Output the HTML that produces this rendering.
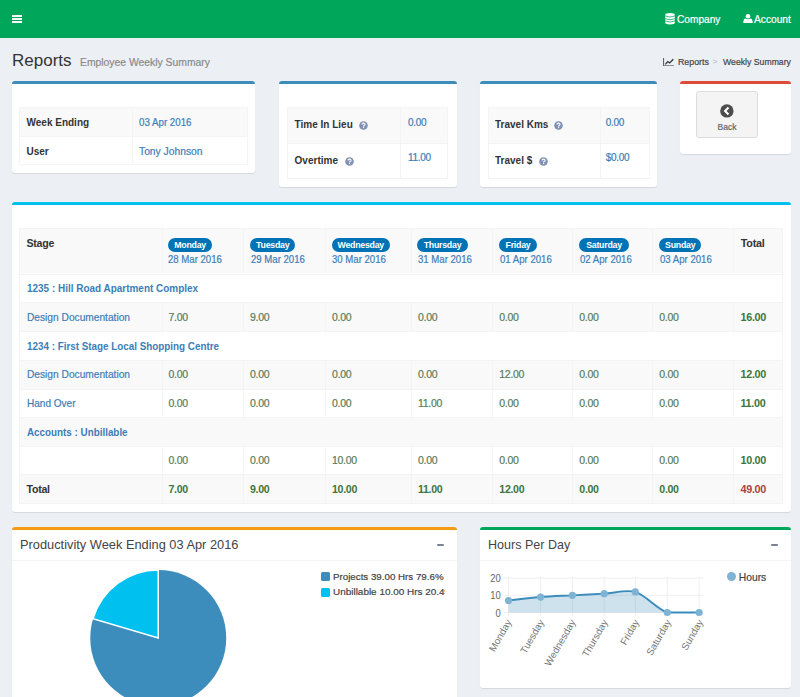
<!DOCTYPE html>
<html><head><meta charset="utf-8"><title>Reports</title>
<style>
html,body{margin:0;padding:0}
body{width:800px;height:697px;overflow:hidden;position:relative;background:#ecf0f5;font-family:"Liberation Sans", sans-serif;}
.a{position:absolute;box-sizing:border-box}
.box{position:absolute;background:#fff;border-radius:3px;box-shadow:0 1px 1px rgba(0,0,0,0.1)}
.t{position:absolute;height:0;line-height:0;white-space:nowrap}
.t span{display:inline-block;vertical-align:baseline}
.n{-webkit-text-stroke:0.2px currentColor}
.r{text-align:right}
.c{text-align:center}
</style></head><body>

<div class="a" style="left:0px;top:0px;width:800px;height:38px;background:#00a65a"></div>
<div class="a" style="left:11.5px;top:15px;width:10.0px;height:1.6999999999999993px;background:#fff"></div>
<div class="a" style="left:11.5px;top:18.2px;width:10.0px;height:1.6999999999999993px;background:#fff"></div>
<div class="a" style="left:11.5px;top:21.3px;width:10.0px;height:1.6999999999999993px;background:#fff"></div>
<svg class="a" style="left:664.5px;top:13px" width="10" height="11.5" viewBox="0 0 10 11.5">
<path d="M0.2 1.8 Q0.2 0.1 5 0.1 Q9.8 0.1 9.8 1.8 V9.7 Q9.8 11.4 5 11.4 Q0.2 11.4 0.2 9.7Z" fill="#fff"/>
<g fill="none" stroke="#00a65a" stroke-width="0.75">
<path d="M0 2.9 Q5 5.2 10 2.9"/><path d="M0 5.6 Q5 7.9 10 5.6"/><path d="M0 7.9 Q5 10.2 10 7.9"/>
</g></svg>
<div class="t n" style="left:677px;top:19.0px;font-size:10.6px;color:#fff;font-weight:400;transform:scaleX(0.956);transform-origin:0 0"><span>Company</span></div>
<svg class="a" style="left:742.5px;top:14px" width="10" height="9" viewBox="0 0 10 9">
<g fill="#fff"><circle cx="5" cy="2.3" r="2.3"/><path d="M0.3 9 Q0.3 4.8 2.6 4.6 Q5 6 7.4 4.6 Q9.7 4.8 9.7 9Z"/></g></svg>
<div class="t n" style="left:754px;top:19.0px;font-size:10.6px;color:#fff;font-weight:400;transform:scaleX(0.963);transform-origin:0 0"><span>Account</span></div>
<div class="t" style="left:12px;top:60.5px;font-size:17px;color:#333;font-weight:400;"><span>Reports</span></div>
<div class="t n" style="left:80px;top:62.0px;font-size:11px;color:#8a8a8a;font-weight:400;transform:scaleX(0.942);transform-origin:0 0"><span>Employee Weekly Summary</span></div>
<svg class="a" style="left:663px;top:57.8px" width="11.5" height="8.5" viewBox="0 0 11.5 8.5">
<path d="M0.6 0 V7.9 H11" fill="none" stroke="#555" stroke-width="1"/>
<path d="M2.3 6.4 L4.8 3.6 L6.6 5 L10.3 1.2" fill="none" stroke="#333" stroke-width="1.3"/>
</svg>
<div class="t n" style="left:678px;top:62.0px;font-size:8.8px;color:#444;font-weight:400;"><span>Reports</span></div>
<div class="t n" style="left:712.8px;top:62.3px;font-size:8px;color:#c4c4c4;font-weight:400;"><span>&gt;</span></div>
<div class="t n" style="left:723px;top:62.0px;font-size:9.3px;color:#444;font-weight:400;transform:scaleX(0.935);transform-origin:0 0"><span>Weekly Summary</span></div>
<div class="box" style="left:12px;top:81px;width:243px;height:89px;border-top:3px solid #3c8dbc"></div>
<div class="box" style="left:279px;top:81px;width:177.5px;height:103px;border-top:3px solid #3c8dbc"></div>
<div class="box" style="left:480px;top:81px;width:177px;height:103px;border-top:3px solid #3c8dbc"></div>
<div class="box" style="left:680px;top:81px;width:110.5px;height:70px;border-top:3px solid #dd4b39"></div>
<div class="a" style="left:19px;top:107px;width:229px;height:28.5px;background:#f9f9f9"></div>
<div class="a" style="left:19px;top:135.5px;width:229px;height:29.0px;background:#fff"></div>
<div class="a" style="left:19px;top:107px;width:229px;height:57.5px;border:1px solid #f4f4f4"></div>
<div class="a" style="left:19px;top:135.5px;width:229px;height:1.0px;background:#f4f4f4"></div>
<div class="a" style="left:132px;top:107px;width:1px;height:57.5px;background:#f4f4f4"></div>
<div class="t" style="left:26.5px;top:122.7px;font-size:10px;color:#333;font-weight:700;"><span>Week Ending</span></div>
<div class="t n" style="left:139px;top:122.5px;font-size:10.2px;color:#3d7db8;font-weight:400;transform:scaleX(0.955);transform-origin:0 0"><span>03 Apr 2016</span></div>
<div class="t" style="left:26.5px;top:152.0px;font-size:10px;color:#333;font-weight:700;"><span>User</span></div>
<div class="t n" style="left:139px;top:152.0px;font-size:10.3px;color:#3d7db8;font-weight:400;"><span>Tony Johnson</span></div>
<div class="a" style="left:286.5px;top:107px;width:161.5px;height:36px;background:#f9f9f9"></div>
<div class="a" style="left:286.5px;top:143px;width:161.5px;height:36px;background:#fff"></div>
<div class="a" style="left:286.5px;top:107px;width:161.5px;height:72px;border:1px solid #f4f4f4"></div>
<div class="a" style="left:286.5px;top:143px;width:161.5px;height:1px;background:#f4f4f4"></div>
<div class="a" style="left:400px;top:107px;width:1px;height:72px;background:#f4f4f4"></div>
<div class="t" style="left:294.6px;top:124.7px;font-size:10px;color:#333;font-weight:700;"><span>Time In Lieu</span></div>
<svg class="a" style="left:358.6px;top:120.8px" width="9" height="9" viewBox="0 0 9 9"><circle cx="4.5" cy="4.5" r="4.3" fill="#8190b5"/><path d="M3 3.5 Q3 2.1 4.5 2.1 Q6 2.1 6 3.4 Q6 4.2 5 4.6 Q4.6 4.8 4.6 5.4" fill="none" stroke="#fff" stroke-width="1.1"/><rect x="4.0" y="6" width="1.1" height="1.1" fill="#fff"/></svg>
<div class="t n" style="left:408px;top:122.5px;font-size:10px;color:#3d7db8;font-weight:400;letter-spacing:-0.3px"><span>0.00</span></div>
<div class="t" style="left:294.6px;top:161.0px;font-size:10px;color:#333;font-weight:700;"><span>Overtime</span></div>
<svg class="a" style="left:345.3px;top:156.5px" width="9" height="9" viewBox="0 0 9 9"><circle cx="4.5" cy="4.5" r="4.3" fill="#8190b5"/><path d="M3 3.5 Q3 2.1 4.5 2.1 Q6 2.1 6 3.4 Q6 4.2 5 4.6 Q4.6 4.8 4.6 5.4" fill="none" stroke="#fff" stroke-width="1.1"/><rect x="4.0" y="6" width="1.1" height="1.1" fill="#fff"/></svg>
<div class="t n" style="left:408px;top:158.0px;font-size:10px;color:#3d7db8;font-weight:400;letter-spacing:-0.3px"><span>11.00</span></div>
<div class="a" style="left:487.5px;top:107px;width:162.0px;height:36px;background:#f9f9f9"></div>
<div class="a" style="left:487.5px;top:143px;width:162.0px;height:36px;background:#fff"></div>
<div class="a" style="left:487.5px;top:107px;width:162.0px;height:72px;border:1px solid #f4f4f4"></div>
<div class="a" style="left:487.5px;top:143px;width:162.0px;height:1px;background:#f4f4f4"></div>
<div class="a" style="left:599.5px;top:107px;width:1.0px;height:72px;background:#f4f4f4"></div>
<div class="t" style="left:495px;top:124.7px;font-size:10px;color:#333;font-weight:700;"><span>Travel Kms</span></div>
<svg class="a" style="left:553.6px;top:120.8px" width="9" height="9" viewBox="0 0 9 9"><circle cx="4.5" cy="4.5" r="4.3" fill="#8190b5"/><path d="M3 3.5 Q3 2.1 4.5 2.1 Q6 2.1 6 3.4 Q6 4.2 5 4.6 Q4.6 4.8 4.6 5.4" fill="none" stroke="#fff" stroke-width="1.1"/><rect x="4.0" y="6" width="1.1" height="1.1" fill="#fff"/></svg>
<div class="t n" style="left:605.7px;top:122.5px;font-size:10px;color:#3d7db8;font-weight:400;letter-spacing:-0.3px"><span>0.00</span></div>
<div class="t" style="left:495px;top:161.0px;font-size:10px;color:#333;font-weight:700;"><span>Travel $</span></div>
<svg class="a" style="left:538.5px;top:156.5px" width="9" height="9" viewBox="0 0 9 9"><circle cx="4.5" cy="4.5" r="4.3" fill="#8190b5"/><path d="M3 3.5 Q3 2.1 4.5 2.1 Q6 2.1 6 3.4 Q6 4.2 5 4.6 Q4.6 4.8 4.6 5.4" fill="none" stroke="#fff" stroke-width="1.1"/><rect x="4.0" y="6" width="1.1" height="1.1" fill="#fff"/></svg>
<div class="t n" style="left:605.7px;top:158.0px;font-size:10px;color:#3d7db8;font-weight:400;letter-spacing:-0.3px"><span>$0.00</span></div>
<div class="a" style="left:696px;top:91px;width:62px;height:47px;background:#f4f4f4;border:1px solid #ddd;border-radius:3px"></div>
<svg class="a" style="left:720px;top:104.4px" width="14" height="14" viewBox="0 0 14 14">
<circle cx="6.9" cy="6.9" r="6.7" fill="#4d4d4d"/><path d="M8.5 3.4 L5.1 6.9 L8.5 10.4" fill="none" stroke="#fff" stroke-width="2.1"/></svg>
<div class="t c n" style="left:527px;width:400px;top:126.7px;font-size:8.5px;color:#666;font-weight:400;"><span>Back</span></div>
<div class="box" style="left:12px;top:202px;width:778.5px;height:306.5px;border-top:3px solid #00c0ef"></div>
<div class="a" style="left:19px;top:228.2px;width:764px;height:45.30000000000001px;background:#f9f9f9"></div>
<div class="a" style="left:19px;top:273.5px;width:764px;height:28.5px;background:#fff"></div>
<div class="a" style="left:19px;top:302px;width:764px;height:28.899999999999977px;background:#f9f9f9"></div>
<div class="a" style="left:19px;top:330.9px;width:764px;height:28.600000000000023px;background:#fff"></div>
<div class="a" style="left:19px;top:359.5px;width:764px;height:29.100000000000023px;background:#f9f9f9"></div>
<div class="a" style="left:19px;top:388.6px;width:764px;height:28.599999999999966px;background:#fff"></div>
<div class="a" style="left:19px;top:417.2px;width:764px;height:28.5px;background:#f9f9f9"></div>
<div class="a" style="left:19px;top:445.7px;width:764px;height:28.600000000000023px;background:#fff"></div>
<div class="a" style="left:19px;top:474.3px;width:764px;height:29.5px;background:#f9f9f9"></div>
<div class="a" style="left:19px;top:228.2px;width:764px;height:275.6px;border:1px solid #f4f4f4"></div>
<div class="a" style="left:19px;top:273.5px;width:764px;height:1.0px;background:#f4f4f4"></div>
<div class="a" style="left:19px;top:302px;width:764px;height:1px;background:#f4f4f4"></div>
<div class="a" style="left:19px;top:330.9px;width:764px;height:1.0px;background:#f4f4f4"></div>
<div class="a" style="left:19px;top:359.5px;width:764px;height:1.0px;background:#f4f4f4"></div>
<div class="a" style="left:19px;top:388.6px;width:764px;height:1.0px;background:#f4f4f4"></div>
<div class="a" style="left:19px;top:417.2px;width:764px;height:1.0px;background:#f4f4f4"></div>
<div class="a" style="left:19px;top:445.7px;width:764px;height:1.0px;background:#f4f4f4"></div>
<div class="a" style="left:19px;top:474.3px;width:764px;height:1.0px;background:#f4f4f4"></div>
<div class="a" style="left:161.5px;top:228.2px;width:1.0px;height:45.30000000000001px;background:#f4f4f4"></div>
<div class="a" style="left:243px;top:228.2px;width:1px;height:45.30000000000001px;background:#f4f4f4"></div>
<div class="a" style="left:325px;top:228.2px;width:1px;height:45.30000000000001px;background:#f4f4f4"></div>
<div class="a" style="left:411px;top:228.2px;width:1px;height:45.30000000000001px;background:#f4f4f4"></div>
<div class="a" style="left:492.3px;top:228.2px;width:1.0px;height:45.30000000000001px;background:#f4f4f4"></div>
<div class="a" style="left:572.3px;top:228.2px;width:1.0px;height:45.30000000000001px;background:#f4f4f4"></div>
<div class="a" style="left:652.3px;top:228.2px;width:1.0px;height:45.30000000000001px;background:#f4f4f4"></div>
<div class="a" style="left:733px;top:228.2px;width:1px;height:45.30000000000001px;background:#f4f4f4"></div>
<div class="a" style="left:161.5px;top:302px;width:1.0px;height:28.899999999999977px;background:#f4f4f4"></div>
<div class="a" style="left:243px;top:302px;width:1px;height:28.899999999999977px;background:#f4f4f4"></div>
<div class="a" style="left:325px;top:302px;width:1px;height:28.899999999999977px;background:#f4f4f4"></div>
<div class="a" style="left:411px;top:302px;width:1px;height:28.899999999999977px;background:#f4f4f4"></div>
<div class="a" style="left:492.3px;top:302px;width:1.0px;height:28.899999999999977px;background:#f4f4f4"></div>
<div class="a" style="left:572.3px;top:302px;width:1.0px;height:28.899999999999977px;background:#f4f4f4"></div>
<div class="a" style="left:652.3px;top:302px;width:1.0px;height:28.899999999999977px;background:#f4f4f4"></div>
<div class="a" style="left:733px;top:302px;width:1px;height:28.899999999999977px;background:#f4f4f4"></div>
<div class="a" style="left:161.5px;top:359.5px;width:1.0px;height:29.100000000000023px;background:#f4f4f4"></div>
<div class="a" style="left:243px;top:359.5px;width:1px;height:29.100000000000023px;background:#f4f4f4"></div>
<div class="a" style="left:325px;top:359.5px;width:1px;height:29.100000000000023px;background:#f4f4f4"></div>
<div class="a" style="left:411px;top:359.5px;width:1px;height:29.100000000000023px;background:#f4f4f4"></div>
<div class="a" style="left:492.3px;top:359.5px;width:1.0px;height:29.100000000000023px;background:#f4f4f4"></div>
<div class="a" style="left:572.3px;top:359.5px;width:1.0px;height:29.100000000000023px;background:#f4f4f4"></div>
<div class="a" style="left:652.3px;top:359.5px;width:1.0px;height:29.100000000000023px;background:#f4f4f4"></div>
<div class="a" style="left:733px;top:359.5px;width:1px;height:29.100000000000023px;background:#f4f4f4"></div>
<div class="a" style="left:161.5px;top:388.6px;width:1.0px;height:28.599999999999966px;background:#f4f4f4"></div>
<div class="a" style="left:243px;top:388.6px;width:1px;height:28.599999999999966px;background:#f4f4f4"></div>
<div class="a" style="left:325px;top:388.6px;width:1px;height:28.599999999999966px;background:#f4f4f4"></div>
<div class="a" style="left:411px;top:388.6px;width:1px;height:28.599999999999966px;background:#f4f4f4"></div>
<div class="a" style="left:492.3px;top:388.6px;width:1.0px;height:28.599999999999966px;background:#f4f4f4"></div>
<div class="a" style="left:572.3px;top:388.6px;width:1.0px;height:28.599999999999966px;background:#f4f4f4"></div>
<div class="a" style="left:652.3px;top:388.6px;width:1.0px;height:28.599999999999966px;background:#f4f4f4"></div>
<div class="a" style="left:733px;top:388.6px;width:1px;height:28.599999999999966px;background:#f4f4f4"></div>
<div class="a" style="left:161.5px;top:445.7px;width:1.0px;height:28.600000000000023px;background:#f4f4f4"></div>
<div class="a" style="left:243px;top:445.7px;width:1px;height:28.600000000000023px;background:#f4f4f4"></div>
<div class="a" style="left:325px;top:445.7px;width:1px;height:28.600000000000023px;background:#f4f4f4"></div>
<div class="a" style="left:411px;top:445.7px;width:1px;height:28.600000000000023px;background:#f4f4f4"></div>
<div class="a" style="left:492.3px;top:445.7px;width:1.0px;height:28.600000000000023px;background:#f4f4f4"></div>
<div class="a" style="left:572.3px;top:445.7px;width:1.0px;height:28.600000000000023px;background:#f4f4f4"></div>
<div class="a" style="left:652.3px;top:445.7px;width:1.0px;height:28.600000000000023px;background:#f4f4f4"></div>
<div class="a" style="left:733px;top:445.7px;width:1px;height:28.600000000000023px;background:#f4f4f4"></div>
<div class="a" style="left:161.5px;top:474.3px;width:1.0px;height:29.5px;background:#f4f4f4"></div>
<div class="a" style="left:243px;top:474.3px;width:1px;height:29.5px;background:#f4f4f4"></div>
<div class="a" style="left:325px;top:474.3px;width:1px;height:29.5px;background:#f4f4f4"></div>
<div class="a" style="left:411px;top:474.3px;width:1px;height:29.5px;background:#f4f4f4"></div>
<div class="a" style="left:492.3px;top:474.3px;width:1.0px;height:29.5px;background:#f4f4f4"></div>
<div class="a" style="left:572.3px;top:474.3px;width:1.0px;height:29.5px;background:#f4f4f4"></div>
<div class="a" style="left:652.3px;top:474.3px;width:1.0px;height:29.5px;background:#f4f4f4"></div>
<div class="a" style="left:733px;top:474.3px;width:1px;height:29.5px;background:#f4f4f4"></div>
<div class="t" style="left:26.5px;top:242.5px;font-size:10.6px;color:#333;font-weight:700;letter-spacing:-0.25px"><span>Stage</span></div>
<div class="a" style="left:168px;top:237.5px;width:44.19999999999999px;height:14.0px;background:#0073b7;border-radius:7px"></div>
<div class="t c" style="left:-9.900000000000006px;width:400px;top:245.0px;font-size:8.8px;color:#fff;font-weight:700;letter-spacing:-0.25px"><span>Monday</span></div>
<div class="t n" style="left:168.4px;top:259.5px;font-size:10.2px;color:#3d7db8;font-weight:400;transform:scaleX(0.942);transform-origin:0 0"><span>28 Mar 2016</span></div>
<div class="a" style="left:250.2px;top:237.5px;width:45.0px;height:14.0px;background:#0073b7;border-radius:7px"></div>
<div class="t c" style="left:72.69999999999999px;width:400px;top:245.0px;font-size:8.8px;color:#fff;font-weight:700;letter-spacing:-0.25px"><span>Tuesday</span></div>
<div class="t n" style="left:250.6px;top:259.5px;font-size:10.2px;color:#3d7db8;font-weight:400;transform:scaleX(0.942);transform-origin:0 0"><span>29 Mar 2016</span></div>
<div class="a" style="left:331.5px;top:237.5px;width:58.5px;height:14.0px;background:#0073b7;border-radius:7px"></div>
<div class="t c" style="left:160.75px;width:400px;top:245.0px;font-size:8.8px;color:#fff;font-weight:700;letter-spacing:-0.25px"><span>Wednesday</span></div>
<div class="t n" style="left:331.9px;top:259.5px;font-size:10.2px;color:#3d7db8;font-weight:400;transform:scaleX(0.942);transform-origin:0 0"><span>30 Mar 2016</span></div>
<div class="a" style="left:417.3px;top:237.5px;width:50.39999999999998px;height:14.0px;background:#0073b7;border-radius:7px"></div>
<div class="t c" style="left:242.5px;width:400px;top:245.0px;font-size:8.8px;color:#fff;font-weight:700;letter-spacing:-0.25px"><span>Thursday</span></div>
<div class="t n" style="left:417.7px;top:259.5px;font-size:10.2px;color:#3d7db8;font-weight:400;transform:scaleX(0.942);transform-origin:0 0"><span>31 Mar 2016</span></div>
<div class="a" style="left:499.2px;top:237.5px;width:37.599999999999966px;height:14.0px;background:#0073b7;border-radius:7px"></div>
<div class="t c" style="left:318.0px;width:400px;top:245.0px;font-size:8.8px;color:#fff;font-weight:700;letter-spacing:-0.25px"><span>Friday</span></div>
<div class="t n" style="left:499.59999999999997px;top:259.5px;font-size:10.2px;color:#3d7db8;font-weight:400;transform:scaleX(0.942);transform-origin:0 0"><span>01 Apr 2016</span></div>
<div class="a" style="left:579.2px;top:237.5px;width:49.60000000000002px;height:14.0px;background:#0073b7;border-radius:7px"></div>
<div class="t c" style="left:404.0px;width:400px;top:245.0px;font-size:8.8px;color:#fff;font-weight:700;letter-spacing:-0.25px"><span>Saturday</span></div>
<div class="t n" style="left:579.6px;top:259.5px;font-size:10.2px;color:#3d7db8;font-weight:400;transform:scaleX(0.942);transform-origin:0 0"><span>02 Apr 2016</span></div>
<div class="a" style="left:659.2px;top:237.5px;width:42.0px;height:14.0px;background:#0073b7;border-radius:7px"></div>
<div class="t c" style="left:480.20000000000005px;width:400px;top:245.0px;font-size:8.8px;color:#fff;font-weight:700;letter-spacing:-0.25px"><span>Sunday</span></div>
<div class="t n" style="left:659.6px;top:259.5px;font-size:10.2px;color:#3d7db8;font-weight:400;transform:scaleX(0.942);transform-origin:0 0"><span>03 Apr 2016</span></div>
<div class="t" style="left:740.8px;top:242.5px;font-size:10.8px;color:#333;font-weight:700;letter-spacing:-0.25px"><span>Total</span></div>
<div class="t" style="left:26.8px;top:288.1px;font-size:10.5px;color:#3d7db8;font-weight:700;transform:scaleX(0.948);transform-origin:0 0"><span>1235 : Hill Road Apartment Complex</span></div>
<div class="t" style="left:26.8px;top:345.5px;font-size:10.5px;color:#3d7db8;font-weight:700;transform:scaleX(0.9375);transform-origin:0 0"><span>1234 : First Stage Local Shopping Centre</span></div>
<div class="t" style="left:26.8px;top:431.8px;font-size:10.5px;color:#3d7db8;font-weight:700;transform:scaleX(0.937);transform-origin:0 0"><span>Accounts : Unbillable</span></div>
<div class="t n" style="left:26.8px;top:316.6px;font-size:10.5px;color:#3d7db8;font-weight:400;transform:scaleX(0.97);transform-origin:0 0"><span>Design Documentation</span></div>
<div class="t n" style="left:168.5px;top:316.6px;font-size:10.5px;color:#587c59;font-weight:400;letter-spacing:-0.3px"><span>7.00</span></div>
<div class="t n" style="left:250px;top:316.6px;font-size:10.5px;color:#587c59;font-weight:400;letter-spacing:-0.3px"><span>9.00</span></div>
<div class="t n" style="left:332px;top:316.6px;font-size:10.5px;color:#587c59;font-weight:400;letter-spacing:-0.3px"><span>0.00</span></div>
<div class="t n" style="left:418px;top:316.6px;font-size:10.5px;color:#587c59;font-weight:400;letter-spacing:-0.3px"><span>0.00</span></div>
<div class="t n" style="left:499.3px;top:316.6px;font-size:10.5px;color:#587c59;font-weight:400;letter-spacing:-0.3px"><span>0.00</span></div>
<div class="t n" style="left:579.3px;top:316.6px;font-size:10.5px;color:#587c59;font-weight:400;letter-spacing:-0.3px"><span>0.00</span></div>
<div class="t n" style="left:659.3px;top:316.6px;font-size:10.5px;color:#587c59;font-weight:400;letter-spacing:-0.3px"><span>0.00</span></div>
<div class="t" style="left:740.5px;top:316.6px;font-size:10.8px;color:#3c763d;font-weight:700;letter-spacing:-0.3px"><span>16.00</span></div>
<div class="t n" style="left:26.8px;top:374.1px;font-size:10.5px;color:#3d7db8;font-weight:400;transform:scaleX(0.97);transform-origin:0 0"><span>Design Documentation</span></div>
<div class="t n" style="left:168.5px;top:374.1px;font-size:10.5px;color:#587c59;font-weight:400;letter-spacing:-0.3px"><span>0.00</span></div>
<div class="t n" style="left:250px;top:374.1px;font-size:10.5px;color:#587c59;font-weight:400;letter-spacing:-0.3px"><span>0.00</span></div>
<div class="t n" style="left:332px;top:374.1px;font-size:10.5px;color:#587c59;font-weight:400;letter-spacing:-0.3px"><span>0.00</span></div>
<div class="t n" style="left:418px;top:374.1px;font-size:10.5px;color:#587c59;font-weight:400;letter-spacing:-0.3px"><span>0.00</span></div>
<div class="t n" style="left:499.3px;top:374.1px;font-size:10.5px;color:#587c59;font-weight:400;letter-spacing:-0.3px"><span>12.00</span></div>
<div class="t n" style="left:579.3px;top:374.1px;font-size:10.5px;color:#587c59;font-weight:400;letter-spacing:-0.3px"><span>0.00</span></div>
<div class="t n" style="left:659.3px;top:374.1px;font-size:10.5px;color:#587c59;font-weight:400;letter-spacing:-0.3px"><span>0.00</span></div>
<div class="t" style="left:740.5px;top:374.1px;font-size:10.8px;color:#3c763d;font-weight:700;letter-spacing:-0.3px"><span>12.00</span></div>
<div class="t n" style="left:26.8px;top:403.2px;font-size:10.5px;color:#3d7db8;font-weight:400;transform:scaleX(0.955);transform-origin:0 0"><span>Hand Over</span></div>
<div class="t n" style="left:168.5px;top:403.2px;font-size:10.5px;color:#587c59;font-weight:400;letter-spacing:-0.3px"><span>0.00</span></div>
<div class="t n" style="left:250px;top:403.2px;font-size:10.5px;color:#587c59;font-weight:400;letter-spacing:-0.3px"><span>0.00</span></div>
<div class="t n" style="left:332px;top:403.2px;font-size:10.5px;color:#587c59;font-weight:400;letter-spacing:-0.3px"><span>0.00</span></div>
<div class="t n" style="left:418px;top:403.2px;font-size:10.5px;color:#587c59;font-weight:400;letter-spacing:-0.3px"><span>11.00</span></div>
<div class="t n" style="left:499.3px;top:403.2px;font-size:10.5px;color:#587c59;font-weight:400;letter-spacing:-0.3px"><span>0.00</span></div>
<div class="t n" style="left:579.3px;top:403.2px;font-size:10.5px;color:#587c59;font-weight:400;letter-spacing:-0.3px"><span>0.00</span></div>
<div class="t n" style="left:659.3px;top:403.2px;font-size:10.5px;color:#587c59;font-weight:400;letter-spacing:-0.3px"><span>0.00</span></div>
<div class="t" style="left:740.5px;top:403.2px;font-size:10.8px;color:#3c763d;font-weight:700;letter-spacing:-0.3px"><span>11.00</span></div>
<div class="t n" style="left:168.5px;top:460.3px;font-size:10.5px;color:#587c59;font-weight:400;letter-spacing:-0.3px"><span>0.00</span></div>
<div class="t n" style="left:250px;top:460.3px;font-size:10.5px;color:#587c59;font-weight:400;letter-spacing:-0.3px"><span>0.00</span></div>
<div class="t n" style="left:332px;top:460.3px;font-size:10.5px;color:#587c59;font-weight:400;letter-spacing:-0.3px"><span>10.00</span></div>
<div class="t n" style="left:418px;top:460.3px;font-size:10.5px;color:#587c59;font-weight:400;letter-spacing:-0.3px"><span>0.00</span></div>
<div class="t n" style="left:499.3px;top:460.3px;font-size:10.5px;color:#587c59;font-weight:400;letter-spacing:-0.3px"><span>0.00</span></div>
<div class="t n" style="left:579.3px;top:460.3px;font-size:10.5px;color:#587c59;font-weight:400;letter-spacing:-0.3px"><span>0.00</span></div>
<div class="t n" style="left:659.3px;top:460.3px;font-size:10.5px;color:#587c59;font-weight:400;letter-spacing:-0.3px"><span>0.00</span></div>
<div class="t" style="left:740.5px;top:460.3px;font-size:10.8px;color:#3c763d;font-weight:700;letter-spacing:-0.3px"><span>10.00</span></div>
<div class="t" style="left:26.5px;top:488.9px;font-size:10.6px;color:#333;font-weight:700;letter-spacing:-0.25px"><span>Total</span></div>
<div class="t" style="left:168.5px;top:488.9px;font-size:10.6px;color:#3c763d;font-weight:700;letter-spacing:-0.3px"><span>7.00</span></div>
<div class="t" style="left:250px;top:488.9px;font-size:10.6px;color:#3c763d;font-weight:700;letter-spacing:-0.3px"><span>9.00</span></div>
<div class="t" style="left:332px;top:488.9px;font-size:10.6px;color:#3c763d;font-weight:700;letter-spacing:-0.3px"><span>10.00</span></div>
<div class="t" style="left:418px;top:488.9px;font-size:10.6px;color:#3c763d;font-weight:700;letter-spacing:-0.3px"><span>11.00</span></div>
<div class="t" style="left:499.3px;top:488.9px;font-size:10.6px;color:#3c763d;font-weight:700;letter-spacing:-0.3px"><span>12.00</span></div>
<div class="t" style="left:579.3px;top:488.9px;font-size:10.6px;color:#3c763d;font-weight:700;letter-spacing:-0.3px"><span>0.00</span></div>
<div class="t" style="left:659.3px;top:488.9px;font-size:10.6px;color:#3c763d;font-weight:700;letter-spacing:-0.3px"><span>0.00</span></div>
<div class="t" style="left:740.5px;top:488.9px;font-size:10.8px;color:#a94442;font-weight:700;letter-spacing:-0.3px"><span>49.00</span></div>
<div class="box" style="left:12px;top:527px;width:444.5px;height:190px;border-top:3px solid #f39c12"></div>
<div class="a" style="left:12px;top:560px;width:444.5px;height:1px;background:#f4f4f4"></div>
<div class="t" style="left:20px;top:544.5px;font-size:13.4px;color:#444;font-weight:400;transform:scaleX(0.957);transform-origin:0 0"><span>Productivity Week Ending 03 Apr 2016</span></div>
<div class="a" style="left:436.7px;top:543.5px;width:7.400000000000034px;height:2.0px;background:#7a8196;border-radius:1px"></div>
<svg class="a" style="left:0;top:0" width="800" height="697" viewBox="0 0 800 697">
<circle cx="158.25" cy="638" r="68" fill="#3c8dbc"/>
<path d="M158.25 638 L158.25 570 A68 68 0 0 0 93.07 618.62 Z" fill="#00c0ef" stroke="#fff" stroke-width="1.5"/>
</svg>
<div class="a" style="left:321px;top:570px;width:124px;height:40px;overflow:hidden">
<div style="position:absolute;left:0.3px;top:2.4px;width:9px;height:8.6px;background:#3c8dbc;border-radius:1.5px"></div>
<div style="position:absolute;left:0.3px;top:17.8px;width:9px;height:8.8px;background:#00c0ef;border-radius:1.5px"></div>
</div>
<div class="a" style="left:0;top:0;width:444.6px;height:697px;overflow:hidden">
<div class="t n" style="left:333px;top:577.1px;font-size:9.75px;color:#444;font-weight:400;"><span>Projects 39.00 Hrs 79.6%</span></div>
<div class="t n" style="left:333px;top:592.1px;font-size:9.95px;color:#444;font-weight:400;"><span>Unbillable 10.00 Hrs 20.4%</span></div>
</div>
<div class="box" style="left:480px;top:527px;width:310.5px;height:158px;border-top:3px solid #00a65a"></div>
<div class="a" style="left:480px;top:560px;width:310.5px;height:1px;background:#f4f4f4"></div>
<div class="t" style="left:488px;top:544.5px;font-size:13.2px;color:#444;font-weight:400;transform:scaleX(0.95);transform-origin:0 0"><span>Hours Per Day</span></div>
<div class="a" style="left:771px;top:543.5px;width:7.399999999999977px;height:2.0px;background:#7a8196;border-radius:1px"></div>
<svg class="a" style="left:0;top:0" width="800" height="697" viewBox="0 0 800 697">
<line x1="504" y1="612.5" x2="703.5" y2="612.5" stroke="#efefef" stroke-width="1"/>
<line x1="504" y1="595.35" x2="703.5" y2="595.35" stroke="#efefef" stroke-width="1"/>
<line x1="504" y1="578.2" x2="703.5" y2="578.2" stroke="#efefef" stroke-width="1"/>
<line x1="508.5" y1="576.5" x2="508.5" y2="616" stroke="#efefef" stroke-width="1"/>
<line x1="540.6" y1="576.5" x2="540.6" y2="616" stroke="#efefef" stroke-width="1"/>
<line x1="572.4" y1="576.5" x2="572.4" y2="616" stroke="#efefef" stroke-width="1"/>
<line x1="604.2" y1="576.5" x2="604.2" y2="616" stroke="#efefef" stroke-width="1"/>
<line x1="635.3" y1="576.5" x2="635.3" y2="616" stroke="#efefef" stroke-width="1"/>
<line x1="667.2" y1="576.5" x2="667.2" y2="616" stroke="#efefef" stroke-width="1"/>
<line x1="699.1" y1="576.5" x2="699.1" y2="616" stroke="#efefef" stroke-width="1"/>
<path d="M508.50 600.50 C508.50 600.50 530.95 597.84 540.60 597.07 C550.12 596.30 562.86 595.86 572.40 595.35 C581.94 594.84 594.66 594.16 604.20 593.63 C613.53 593.13 626.78 589.37 635.30 591.92 C645.68 595.03 656.80 609.15 667.20 612.50 C675.94 612.50 699.10 612.50 699.10 612.50 L699.1 612.5 L508.5 612.5 Z" fill="rgba(60,141,188,0.25)"/>
<path d="M508.50 600.50 C508.50 600.50 530.95 597.84 540.60 597.07 C550.12 596.30 562.86 595.86 572.40 595.35 C581.94 594.84 594.66 594.16 604.20 593.63 C613.53 593.13 626.78 589.37 635.30 591.92 C645.68 595.03 656.80 609.15 667.20 612.50 C675.94 612.50 699.10 612.50 699.10 612.50" fill="none" stroke="#3c8dbc" stroke-width="1.9"/>
<circle cx="508.5" cy="600.495" r="3.6" fill="#7fb3d5"/>
<circle cx="540.6" cy="597.065" r="3.6" fill="#7fb3d5"/>
<circle cx="572.4" cy="595.35" r="3.6" fill="#7fb3d5"/>
<circle cx="604.2" cy="593.635" r="3.6" fill="#7fb3d5"/>
<circle cx="635.3" cy="591.92" r="3.6" fill="#7fb3d5"/>
<circle cx="667.2" cy="612.5" r="3.6" fill="#7fb3d5"/>
<circle cx="699.1" cy="612.5" r="3.6" fill="#7fb3d5"/>
</svg>
<div class="t r n" style="right:299.4px;top:612.5px;font-size:10.5px;color:#666;font-weight:400;-webkit-text-stroke:0;transform:scaleX(0.9);transform-origin:100% 0"><span>0</span></div>
<div class="t r n" style="right:299.4px;top:595.35px;font-size:10.5px;color:#666;font-weight:400;-webkit-text-stroke:0;transform:scaleX(0.9);transform-origin:100% 0"><span>10</span></div>
<div class="t r n" style="right:299.4px;top:578.2px;font-size:10.5px;color:#666;font-weight:400;-webkit-text-stroke:0;transform:scaleX(0.9);transform-origin:100% 0"><span>20</span></div>
<div class="a" style="left:505.5px;top:618px;width:0;height:0"><div style="position:absolute;right:0;top:0;transform-origin:100% 0;transform:rotate(-60deg);font-size:9.9px;color:#777;white-space:nowrap;line-height:1">Monday</div></div>
<div class="a" style="left:537.6px;top:618px;width:0;height:0"><div style="position:absolute;right:0;top:0;transform-origin:100% 0;transform:rotate(-60deg);font-size:9.9px;color:#777;white-space:nowrap;line-height:1">Tuesday</div></div>
<div class="a" style="left:569.4px;top:618px;width:0;height:0"><div style="position:absolute;right:0;top:0;transform-origin:100% 0;transform:rotate(-60deg);font-size:9.9px;color:#777;white-space:nowrap;line-height:1">Wednesday</div></div>
<div class="a" style="left:601.2px;top:618px;width:0;height:0"><div style="position:absolute;right:0;top:0;transform-origin:100% 0;transform:rotate(-60deg);font-size:9.9px;color:#777;white-space:nowrap;line-height:1">Thursday</div></div>
<div class="a" style="left:632.3px;top:618px;width:0;height:0"><div style="position:absolute;right:0;top:0;transform-origin:100% 0;transform:rotate(-60deg);font-size:9.9px;color:#777;white-space:nowrap;line-height:1">Friday</div></div>
<div class="a" style="left:664.2px;top:618px;width:0;height:0"><div style="position:absolute;right:0;top:0;transform-origin:100% 0;transform:rotate(-60deg);font-size:9.9px;color:#777;white-space:nowrap;line-height:1">Saturday</div></div>
<div class="a" style="left:696.1px;top:618px;width:0;height:0"><div style="position:absolute;right:0;top:0;transform-origin:100% 0;transform:rotate(-60deg);font-size:9.9px;color:#777;white-space:nowrap;line-height:1">Sunday</div></div>
<div class="a" style="left:727px;top:572.4px;width:9px;height:9px;border-radius:50%;background:#7fb3d5"></div>
<div class="t n" style="left:738.8px;top:577.5px;font-size:10.3px;color:#444;font-weight:400;"><span>Hours</span></div>
</body></html>
